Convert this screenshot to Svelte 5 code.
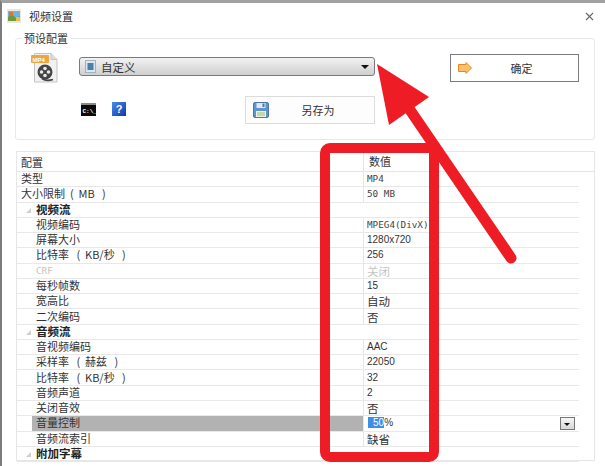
<script>
  const rows = [
    { label: '类型', value: 'MP4', mono: true },
    { label: '大小限制  (  MB   )', value: '50 MB', mono: true },
    { label: '视频流', group: true },
    { label: '视频编码', value: 'MPEG4(DivX)', mono: true, nested: true },
    { label: '屏幕大小', value: '1280x720', digits: true, nested: true },
    { label: '比特率   (  KB/秒   )', value: '256', digits: true, nested: true },
    { label: 'CRF', value: '关闭', nested: true, disabled: true },
    { label: '每秒帧数', value: '15', digits: true, nested: true },
    { label: '宽高比', value: '自动', nested: true },
    { label: '二次编码', value: '否', nested: true },
    { label: '音频流', group: true },
    { label: '音视频编码', value: 'AAC', digits: true, nested: true },
    { label: '采样率   (  赫兹   )', value: '22050', digits: true, nested: true },
    { label: '比特率   (  KB/秒   )', value: '32', digits: true, nested: true },
    { label: '音频声道', value: '2', digits: true, nested: true },
    { label: '关闭音效', value: '否', nested: true },
    { label: '音量控制', nested: true, editing: true },
    { label: '音频流索引', value: '缺省', nested: true },
    { label: '附加字幕', group: true }
  ]
</script>

<div class="window">
  <span class="edge-mark"></span>

  <header class="titlebar">
    <svg class="app-icon" viewBox="0 0 14 14" width="14" height="14">
      <rect width="14" height="14" fill="#e8e8e0" />
      <rect x="1" y="2" width="12" height="10" fill="#6fb4e0" />
      <path d="M1 12 V8 L5 5 L9 9 L13 7 V12 Z" fill="#6a9a3c" />
      <rect x="2" y="3" width="4" height="4" fill="#d9762c" />
      <rect x="9" y="8" width="4" height="4" fill="#e5c04a" />
    </svg>
    <span class="title">视频设置</span>
    <svg class="close" viewBox="0 0 9 9" width="9" height="9">
      <path d="M1 1 L8 8 M8 1 L1 8" stroke="#666" stroke-width="1.1" fill="none" />
    </svg>
  </header>

  <section class="preset">
    <span class="legend">预设配置</span>
    <div class="preset-left">
      <div class="preset-top">
        <svg class="mp4-icon" viewBox="0 0 27 30" width="27" height="30">
          <path d="M3.5 0.5 H20 L26 6.5 V29 H3.5 Z" fill="#f1f1f1" stroke="#c4c4c4" />
          <path d="M20 0.5 V6.5 H26" fill="#dcdcdc" stroke="#c4c4c4" />
          <rect x="0" y="2" width="18" height="8" rx="1" fill="#efa63c" />
          <text x="1.5" y="8.6" class="mp4-text">MP4</text>
          <circle cx="14" cy="19" r="7.5" fill="#444" />
          <circle cx="14" cy="15.5" r="1.8" fill="#e8e8e8" />
          <circle cx="10.5" cy="19" r="1.8" fill="#e8e8e8" />
          <circle cx="17.5" cy="19" r="1.8" fill="#e8e8e8" />
          <circle cx="14" cy="22.5" r="1.8" fill="#e8e8e8" />
          <path d="M11 25.5 Q15 28.5 22 26.5" stroke="#444" stroke-width="1.8" fill="none" />
        </svg>
        <div class="combo">
          <svg viewBox="0 0 11 13" width="11" height="13">
            <rect x="0.5" y="0.5" width="10" height="12" fill="#dbe6ee" stroke="#9fb2c0" />
            <rect x="2.5" y="3" width="6" height="7" fill="#4a7fa6" />
          </svg>
          <span class="combo-text">自定义</span>
          <span class="combo-arrow"></span>
        </div>
      </div>
      <div class="preset-bottom">
        <svg class="cmd" viewBox="0 0 15 13" width="15" height="13">
          <rect width="15" height="13" fill="#0a0a0a" />
          <rect width="15" height="2" fill="#8a8a8a" />
          <text x="1.5" y="9.5" class="cmd-text">C:\_</text>
        </svg>
        <span class="help">?</span>
        <button class="btn save">
          <svg viewBox="0 0 16 16" width="16" height="16">
            <rect x="0.5" y="0.5" width="15" height="15" rx="1.5" fill="#5f95cc" stroke="#4a78a8" />
            <rect x="3.5" y="1" width="9" height="5" fill="#dfe9f2" />
            <rect x="9.5" y="1.5" width="2" height="3.5" fill="#4a78a8" />
            <rect x="3" y="9" width="10" height="6" fill="#eef2e6" />
            <path d="M4 11 H12 M4 13 H12" stroke="#8fc06a" />
          </svg>
          <span>另存为</span>
        </button>
      </div>
    </div>
    <button class="btn ok">
      <svg viewBox="0 0 14 12" width="14" height="12">
        <path d="M0.5 2.5 H8 V0.5 L13.5 6 L8 11.5 V9.5 H0.5 Z" fill="#fbc26b" stroke="#e8861e" />
      </svg>
      <span>确定</span>
    </button>
  </section>

  <section class="props">
    <div class="props-head">
      <span class="name-col">配置</span>
      <span class="value-col">数值</span>
    </div>
    {#each rows as row}
      <div class="row" class:editing={row.editing}>
        <div class="name" class:nested={row.nested} class:group={row.group} class:disabled={row.disabled} class:crf={row.disabled}>
          {#if row.group}<span class="caret"></span>{/if}
          <span class="name-text">{row.label}</span>
        </div>
        <div class="value" class:mono={row.mono} class:digits={row.digits} class:disabled={row.disabled} class:empty={row.group}>
          {#if row.editing}
            <span class="percent"><span class="sel">50</span>%</span>
            <span class="drop"></span>
          {:else}
            {row.value ?? ''}
          {/if}
        </div>
      </div>
    {/each}
  </section>

  <svg class="annotation" viewBox="0 0 605 466" width="605" height="466">
    <rect x="325" y="148" width="109" height="309" rx="5" fill="none" stroke="#ee1c25" stroke-width="10" />
    <path d="M410 110 L511 258" stroke="#ee1c25" stroke-width="11" stroke-linecap="round" />
    <path d="M377 64 L429 97 L389 125 Z" fill="#ee1c25" />
  </svg>
</div>

<style>
  :global(body) {
    margin: 0;
    background: #fff;
  }
  .window {
    width: 605px;
    height: 466px;
    box-sizing: border-box;
    position: relative;
    overflow: hidden;
    background: #fff;
    border-top: 3px solid #a2a2a2;
    border-left: 2px solid #7c7c7c;
    font-family: "Noto Sans CJK SC", "Liberation Sans", sans-serif;
    font-size: 11px;
    color: #333;
  }
  .edge-mark {
    position: absolute;
    left: -2px;
    top: 80px;
    width: 2px;
    height: 10px;
    background: #e08a3a;
  }
  .titlebar {
    display: flex;
    align-items: center;
    height: 26px;
    padding: 0 11px 0 5px;
  }
  .title {
    margin-left: 8px;
    line-height: 14px;
  }
  .close {
    margin-left: auto;
  }
  .preset {
    position: relative;
    box-sizing: border-box;
    display: flex;
    justify-content: space-between;
    align-items: flex-start;
    width: 580px;
    height: 102px;
    margin: 9px 0 0 13px;
    padding: 14px 15px 0 15px;
    border: 1px solid #e8e8e8;
    border-radius: 3px;
  }
  .legend {
    position: absolute;
    left: 5px;
    top: -8px;
    padding: 0 3px;
    background: #fff;
    line-height: 14px;
  }
  .preset-left {
    display: flex;
    flex-direction: column;
    width: 344px;
  }
  .preset-top {
    display: flex;
    align-items: flex-start;
    gap: 21px;
    height: 43px;
  }
  .mp4-text {
    font: bold 6px "Liberation Sans", sans-serif;
    fill: #fff;
  }
  .cmd-text {
    font: bold 6px "Liberation Mono", monospace;
    fill: #fff;
  }
  .combo {
    box-sizing: border-box;
    display: flex;
    align-items: center;
    gap: 5px;
    width: 296px;
    height: 19px;
    margin-top: 4px;
    padding: 0 5px;
    border: 1px solid #7a7a7a;
    border-radius: 3px;
    background: linear-gradient(#f2f2f2, #cfcfcf);
  }
  .combo-text {
    font-size: 11.5px;
  }
  .combo-arrow {
    margin-left: auto;
    border: 4px solid transparent;
    border-top: 4px solid #111;
    border-bottom: 0;
  }
  .preset-bottom {
    display: flex;
    align-items: flex-start;
  }
  .cmd {
    margin: 7px 0 0 50px;
  }
  .help {
    box-sizing: border-box;
    width: 14px;
    height: 14px;
    margin: 6px 0 0 16px;
    background: linear-gradient(135deg, #4a8be8, #1238a8);
    color: #fff;
    font: bold 11px/14px "Liberation Sans", sans-serif;
    text-align: center;
  }
  .btn {
    box-sizing: border-box;
    display: flex;
    align-items: center;
    padding: 0 7px;
    background: #fff;
    font-family: inherit;
    font-size: 11px;
    color: #333;
  }
  .btn span {
    flex: 1;
    text-align: center;
  }
  .save {
    width: 130px;
    height: 28px;
    margin-left: auto;
    border: 1px solid #dcdcdc;
    background: #fdfdfd;
  }
  .ok {
    width: 129px;
    height: 28px;
    margin-top: 1px;
    border: 1px solid #7c7c7c;
  }
  .props {
    box-sizing: border-box;
    width: 579px;
    height: 310px;
    margin: 11px 0 0 14px;
    border: 1px solid #e6e6e6;
  }
  .props-head {
    display: flex;
    align-items: center;
    height: 19px;
    border-bottom: 1px solid #e6e6e6;
  }
  .name-col {
    width: 346px;
    padding-left: 4px;
    box-sizing: border-box;
  }
  .value-col {
    padding-left: 5px;
    border-left: 1px solid #e6e6e6;
    line-height: 19px;
  }
  .row {
    display: flex;
    box-sizing: border-box;
    width: 562px;
    height: 15.28px;
    border-bottom: 1px solid #e8e8e8;
    line-height: 14px;
    white-space: pre;
  }
  .name {
    box-sizing: border-box;
    display: flex;
    align-items: center;
    width: 346px;
    padding: 0 0 2px 4px;
  }
  .name.nested,
  .name.group {
    padding-left: 19px;
  }
  .name.group {
    position: relative;
    font-size: 11.5px;
    font-weight: 700;
    color: #222;
  }
  .name.crf {
    font-family: "DejaVu Sans Mono", monospace;
    font-size: 9.3px;
    padding-bottom: 0;
  }
  .caret {
    position: absolute;
    left: 9px;
    top: 5px;
    width: 0;
    height: 0;
    border-left: 5px solid transparent;
    border-bottom: 5px solid #cfcfcf;
  }
  .editing .name {
    background: linear-gradient(to right, transparent 15px, #b2b2b2 15px);
  }
  .disabled {
    color: #c4c4c4;
  }
  .value {
    flex: 1;
    display: flex;
    align-items: center;
    padding-left: 3px;
    border-left: 1px solid #e6e6e6;
    font-size: 11.5px;
  }
  .value.mono {
    font-family: "DejaVu Sans Mono", monospace;
    font-size: 9.3px;
    color: #444;
  }
  .value.digits,
  .percent {
    font-family: "Liberation Sans", sans-serif;
    font-size: 10px;
  }
  .value.empty {
    border-left: 0;
  }
  .percent {
    margin-left: 1px;
  }
  .sel {
    padding-left: 5px;
    background: #3d8fe8;
    color: #fff;
  }
  .drop {
    position: relative;
    box-sizing: border-box;
    width: 15px;
    height: 13px;
    margin-left: auto;
    margin-right: 4px;
    border: 1px solid #777;
    background: linear-gradient(#f6f6f6, #d8d8d8);
  }
  .drop::after {
    content: "";
    position: absolute;
    left: 3px;
    top: 5px;
    border: 3.5px solid transparent;
    border-top: 3.5px solid #111;
    border-bottom: 0;
  }
  .annotation {
    position: absolute;
    left: -2px;
    top: -3px;
    pointer-events: none;
  }
</style>
